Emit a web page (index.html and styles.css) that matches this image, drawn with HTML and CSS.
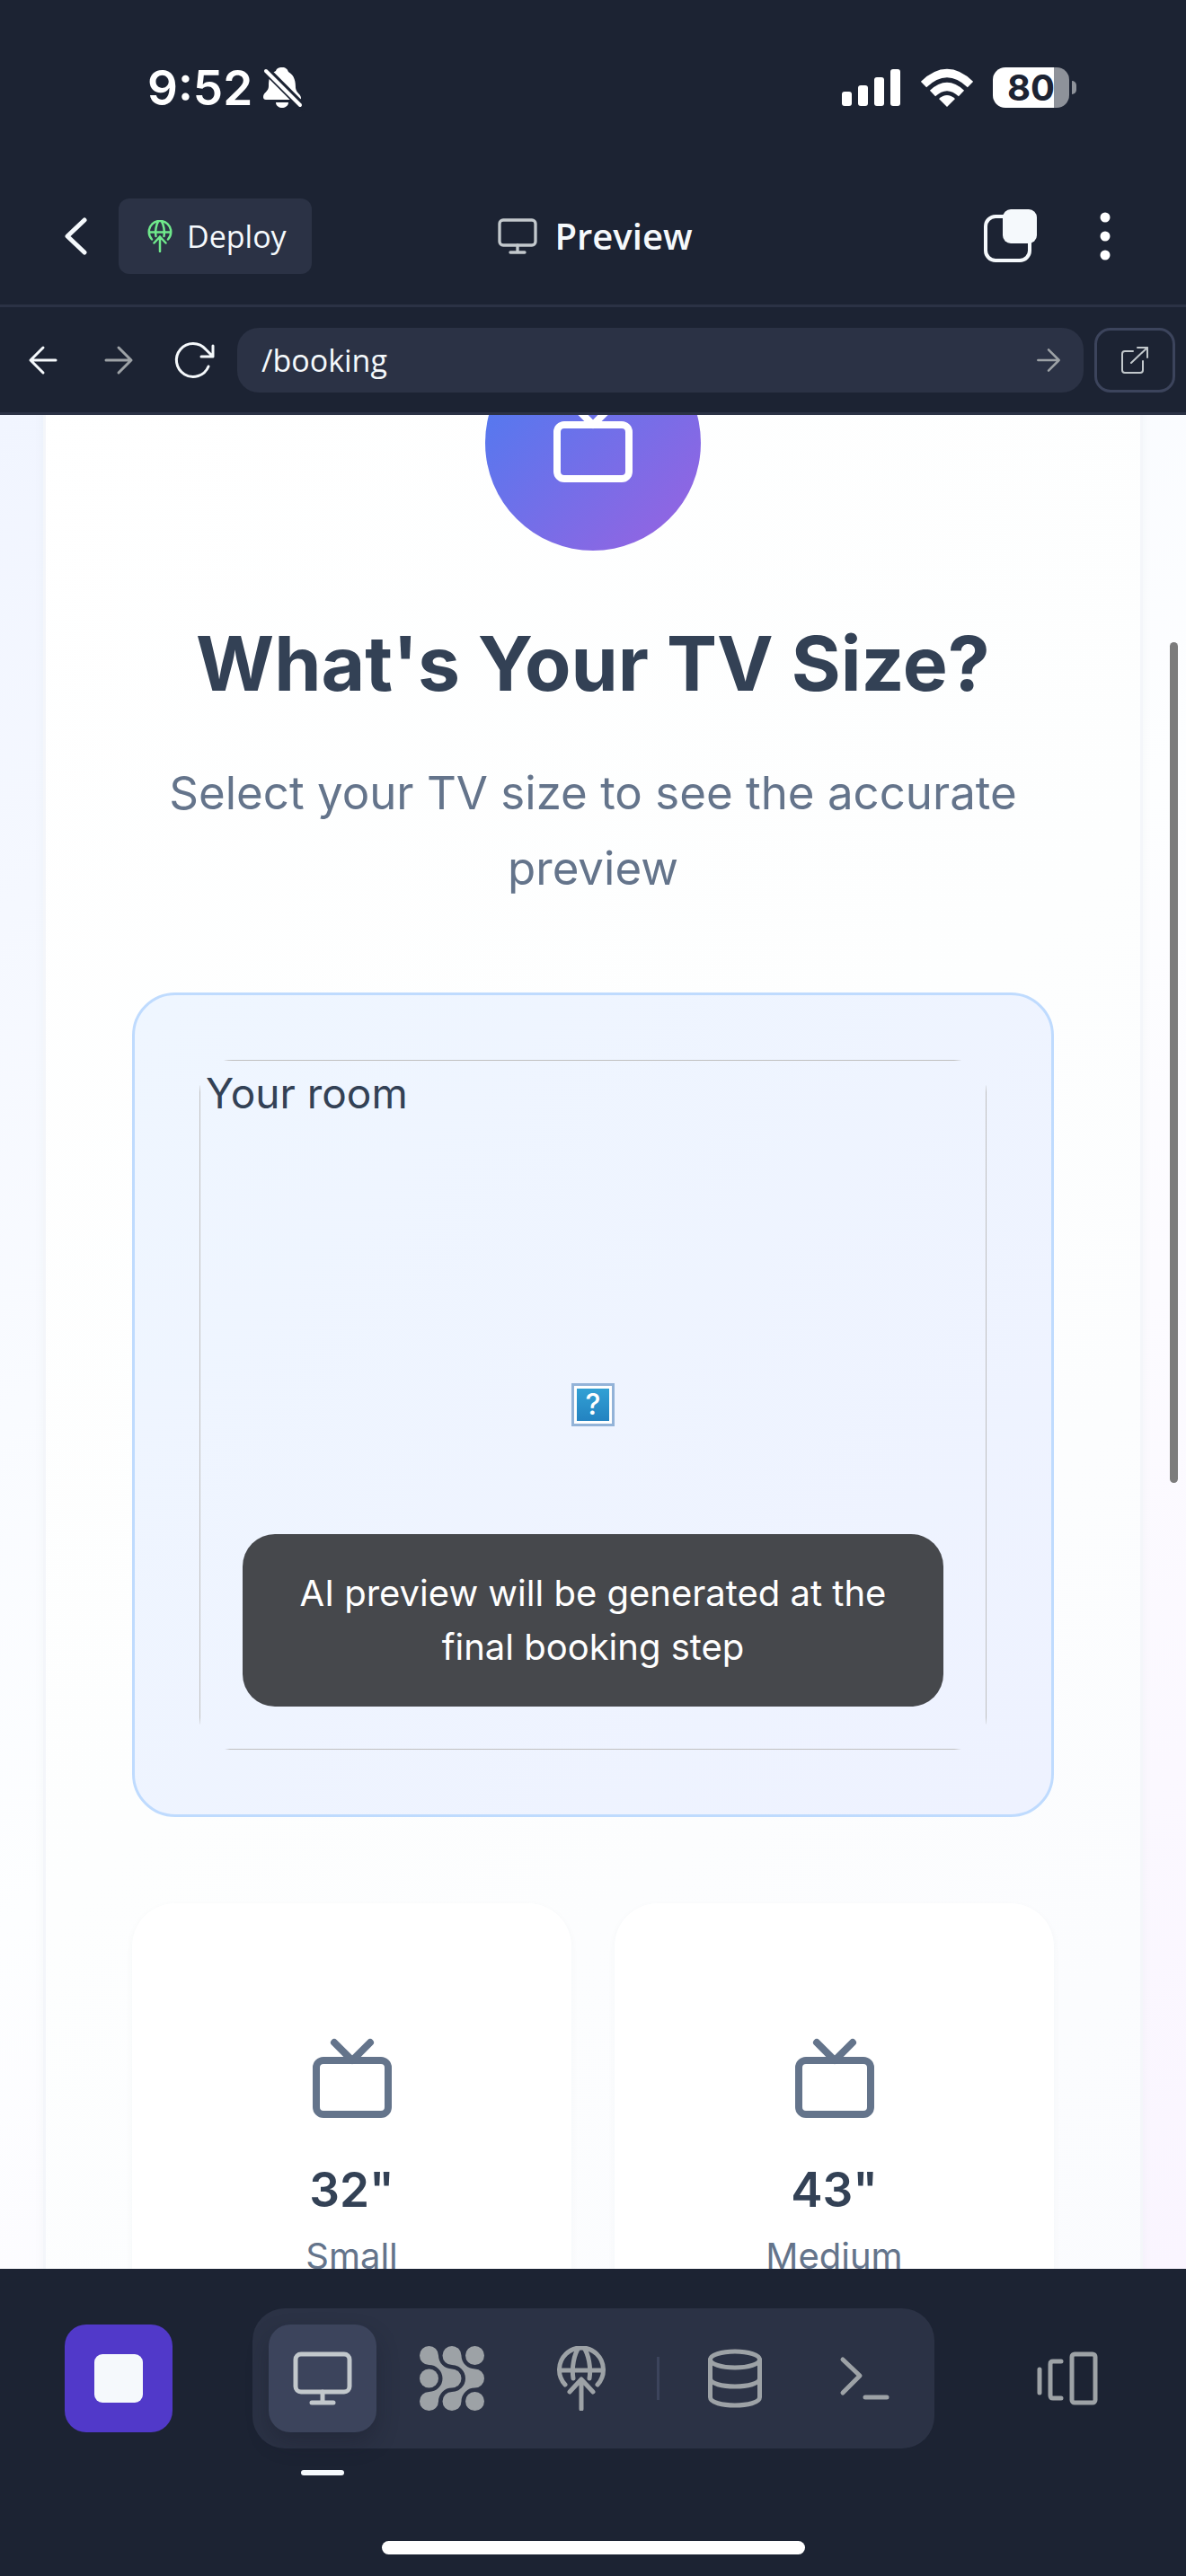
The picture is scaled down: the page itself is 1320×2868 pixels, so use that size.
FILE: index.html
```html
<!DOCTYPE html>
<html lang="en">
<head>
<meta charset="utf-8">
<meta name="viewport" content="width=device-width, initial-scale=1">
<title>Preview</title>
<link rel="stylesheet" href="styles.css">
</head>
<body>
<svg class="sprite" aria-hidden="true">
  <symbol id="tv" viewBox="0 0 24 24"><rect x="2" y="7" width="20" height="15" rx="2"/><path d="M17 2l-5 5-5-5"/></symbol>
  <symbol id="monitor" viewBox="0 0 72 72"><rect x="6" y="9" width="60" height="42" rx="6"/><path d="M36 51v12M24 63h24"/></symbol>
  <symbol id="deploy" viewBox="0 0 72 72"><path d="M18 43A24.500 24.500 0 1 1 54 43M12 27h48M27 36C25 24 28 9 33 2M45 36C47 24 44 9 39 2M36 70V37M23 51l13-14 13 14"/></symbol>
  <symbol id="arrow" viewBox="0 0 36 36"><path d="M4 18h28M18 4l14 14-14 14"/></symbol>
</svg>
<div class="app">
  <div class="status">
    <div class="clock">
      <span>9:52</span>
      <svg width="48" height="52" viewBox="0 0 48 52">
        <path fill="#fff" d="M23 3c4 0 6 2 7 5 7 4 8 11 8 18 1 6 6 7 6 11 0 2-1 2-3 2H5c-2 0-3-1-3-3 0-5 6-6 6-12 0-8 1-14 8-17 1-3 3-4 7-4zM16 42h14c0 4-4 6-7 6s-7-2-7-6z"/>
        <path stroke="#1c2333" stroke-width="9" d="M2 3l44 44"/><path stroke="#fff" stroke-width="4" stroke-linecap="round" d="M5 7l38 38"/>
      </svg>
    </div>
    <div class="signals">
      <svg class="light" width="66" height="42" viewBox="0 0 66 42"><rect y="25" width="11" height="16" rx="3"/><rect x="18" y="18" width="11" height="23" rx="3"/><rect x="36" y="9" width="11" height="32" rx="3"/><rect x="54" width="11" height="41" rx="3"/></svg>
      <svg class="wifi" width="58" height="44" viewBox="0 0 58 44"><path d="M3 18Q29-7 55 18M13 28Q29 13 45 28"/><path class="light" d="M20 34q9-8 18 0l-9 9z"/></svg>
      <div class="battery"><span>80</span></div>
    </div>
  </div>

  <header class="header">
    <div class="header-left">
      <button class="back" aria-label="Back"><svg width="30" height="48" viewBox="0 0 30 48"><path d="M25 6L6 24l19 18"/></svg></button>
      <button class="deploy"><svg width="36" height="36" viewBox="0 0 72 72"><use href="#deploy"/></svg>Deploy</button>
    </div>
    <h1 class="header-title"><svg width="54" height="48"><use href="#monitor"/></svg>Preview</h1>
    <div class="header-right">
      <button aria-label="Tabs"><svg width="60" height="60" viewBox="0 0 60 60"><rect x="2" y="8" width="49" height="49" rx="11" fill="none" stroke="#f5f9fc" stroke-width="4"/><rect x="21" y="0" width="38" height="38" rx="9" fill="#f5f9fc"/></svg></button>
      <button aria-label="More"><svg class="light" width="12" height="54" viewBox="0 0 12 54"><circle cx="6" cy="6" r="5.500"/><circle cx="6" cy="27" r="5.500"/><circle cx="6" cy="48" r="5.500"/></svg></button>
    </div>
  </header>

  <nav class="toolbar">
    <button class="tool" aria-label="Go back"><svg class="flip" width="36" height="36"><use href="#arrow"/></svg></button>
    <button class="tool dim" aria-label="Go forward"><svg width="36" height="36"><use href="#arrow"/></svg></button>
    <button class="tool" aria-label="Reload"><svg width="48" height="48" viewBox="0 0 48 48"><path d="M40 31A18.500 18.500 0 1 1 37 12L45 20M45 8v12H32"/></svg></button>
    <form class="url">
      <input type="text" value="/booking" aria-label="Path">
      <button aria-label="Go" type="button"><svg width="30" height="30"><use href="#arrow"/></svg></button>
    </form>
    <button class="open" aria-label="Open in new tab"><svg width="36" height="36" viewBox="0 0 36 36"><path d="M16 8H7q-3 0-3 3v18q0 3 3 3h17q3 0 3-3V19M14 21L32 4M21 4h11v11"/></svg></button>
  </nav>

  <main class="page">
    <section class="card">
      <div class="badge"><svg width="96" height="96"><use href="#tv"/></svg></div>
      <h2>What's Your TV Size?</h2>
      <p class="lead">Select your TV size to see the accurate preview</p>
      <div class="preview">
        <div class="frame">
          <div class="image">
            <span class="alt">Your room</span>
            <span class="missing">?</span>
          </div>
          <p class="note">AI preview will be generated at the final booking step</p>
        </div>
      </div>
      <div class="sizes">
        <button class="size"><svg width="96" height="96"><use href="#tv"/></svg><strong>32"</strong><span>Small</span></button>
        <button class="size"><svg width="96" height="96"><use href="#tv"/></svg><strong>43"</strong><span>Medium</span></button>
      </div>
    </section>
    <div class="scrollbar"></div>
  </main>

  <footer class="bottom">
    <div class="bar">
      <button class="stop" aria-label="Stop"><span></span></button>
      <div class="dock">
        <button class="active" aria-label="Preview"><svg width="72" height="72"><use href="#monitor"/></svg></button>
        <button aria-label="Agent"><svg width="72" height="72" viewBox="0 0 72 72"><g class="solid"><path id="blob" d="M10.500 0A10.500 10.500 0 0 1 21 10.500 15 15 0 0 0 36 25.500 10.500 10.500 0 0 1 36 46.500 15 15 0 0 0 21 61.500 10.500 10.500 0 1 1 10.500 51 15 15 0 0 0 10.500 21 10.500 10.500 0 1 1 10.500 0z"/><use href="#blob" x="25.500"/><circle cx="10.500" cy="36" r="10.500"/><circle cx="61.500" cy="10.500" r="10.500"/><circle cx="61.500" cy="61.500" r="10.500"/></g></svg></button>
        <button aria-label="Deployments"><svg width="72" height="72"><use href="#deploy"/></svg></button>
        <i class="divider"></i>
        <button aria-label="Database"><svg width="72" height="72" viewBox="0 0 72 72"><ellipse cx="36" cy="15" rx="27.500" ry="9"/><path d="M8.500 15v42c0 12 55 12 55 0V15M8.500 36c0 12 55 12 55 0"/></svg></button>
        <button aria-label="Shell"><svg width="72" height="72" viewBox="0 0 72 72"><path d="M12 15l19 18-19 19M37 57h24"/></svg></button>
      </div>
      <button class="switcher" aria-label="Switch tabs"><svg width="72" height="72" viewBox="0 0 72 72"><path d="M5 26v26M29 17H20q-3 0-3 3v35q0 3 3 3h9"/><rect x="41" y="9" width="26" height="54" rx="3"/></svg></button>
    </div>
    <div class="home"></div>
  </footer>
</div>
</body>
</html>
```
FILE: styles.css
```css
* { box-sizing: border-box; }
body { margin: 0; font-family: Inter, "Liberation Sans", sans-serif; background: #1c2333; color: #334155; }
h1, h2, p { margin: 0; }
button { margin: 0; padding: 0; border: 0; background: none; font: inherit; color: inherit; display: flex; align-items: center; justify-content: center; }
svg { display: block; flex: none; fill: none; stroke-linecap: round; stroke-linejoin: round; }
.light { fill: #fff; stroke: none; }
.sprite { position: absolute; width: 0; height: 0; }
.app { height: 100vh; display: flex; flex-direction: column; overflow: hidden; }

.status { display: flex; justify-content: space-between; align-items: center; height: 187px; padding: 8px 130px 0 164px; color: #fff; flex: none; }
.clock { display: flex; align-items: center; gap: 10px; font-size: 53px; line-height: 60px; font-weight: 600; }
.signals { display: flex; align-items: center; gap: 22px; }
.wifi { stroke: #fff; stroke-width: 9; stroke-linecap: butt; }
.battery { position: relative; width: 85px; height: 45px; border-radius: 14px; background: linear-gradient(90deg, #fff 80%, #8e929a 80%); color: #1c2333; font-size: 40px; line-height: 45px; font-weight: 700; text-align: center; }
.battery::after { content: ""; position: absolute; left: 88px; top: 15px; width: 5px; height: 15px; border-radius: 0 6px 6px 0; background: #8e929a; }

.header { flex: none; display: grid; grid-template-columns: 1fr auto 1fr; align-items: center; height: 155px; border-bottom: 3px solid #2b3245; color: #f5f9fc; font-family: "Open Sans", sans-serif; }
.header-left { display: flex; align-items: center; padding-left: 69px; gap: 33px; }
.back svg { stroke: #f5f9fc; stroke-width: 5; }
.deploy { height: 84px; padding: 0 28px; border-radius: 12px; background: #2b3245; font-size: 34px; gap: 12px; }
.deploy svg { stroke: #6fe88b; stroke-width: 5; }
.header-title { display: flex; align-items: center; gap: 14px; font-size: 40px; font-weight: 600; line-height: 48px; }
.header-title svg { stroke: #c2c8cc; stroke-width: 5; }
.header-right { display: flex; align-items: center; justify-content: flex-end; gap: 69px; padding-right: 84px; }

.toolbar { flex: none; display: flex; align-items: center; height: 120px; padding: 0 12px 0 6px; border-bottom: 3px solid #2b3245; }
.tool { width: 84px; height: 72px; }
.tool svg { stroke: #f5f9fc; stroke-width: 3; }
.tool.dim svg { stroke: #9da2a6; }
.flip { transform: scaleX(-1); }
.url { flex: 1; display: flex; align-items: center; height: 72px; margin: 0 12px 0 6px; padding: 0 24px 0 27px; border-radius: 24px; background: #2b3245; }
.url input { flex: 1; min-width: 0; padding: 0; border: 0; outline: 0; background: none; color: #f5f9fc; font: 34px "Open Sans", sans-serif; }
.url svg { stroke: #9da2a6; stroke-width: 3; }
.open { width: 90px; height: 72px; border: 3px solid #3c445c; border-radius: 18px; }
.open svg { stroke: #c2c8cc; stroke-width: 2; }

.page { position: relative; flex: 1; min-height: 0; overflow: hidden; padding: 0 48px; background: linear-gradient(135deg, #f1f5ff 0%, #fdfeff 50%, #faf5ff 100%); }
.card { margin-top: -188px; padding: 96px; border: 3px solid #f4f6fa; background: linear-gradient(135deg, #ffffff 0%, #fdfefe 50%, #fafbfe 100%); box-shadow: 0 0 12px rgba(51, 65, 85, .04); text-align: center; }
.badge { display: flex; align-items: center; justify-content: center; width: 240px; height: 240px; margin: 0 auto 72px; border-radius: 50%; background: linear-gradient(135deg, #477df2, #9a62e0); }
.badge svg { stroke: #fff; stroke-width: 2; }
h2 { font-size: 84px; line-height: 108px; font-weight: 700; }
.lead { margin: 48px 0 96px; font-size: 51px; line-height: 84px; color: #64748b; }
.preview { padding: 72px; border: 3px solid #bfdbfe; border-radius: 48px; background: linear-gradient(135deg, #eff6ff, #eef2ff); }
.frame { position: relative; border-radius: 36px; overflow: hidden; }
.image { display: grid; place-items: center; height: 768px; border: 1px solid #c0c0c0; }
.image > * { grid-area: 1 / 1; }
.alt { place-self: start; padding: 6px; font-size: 46px; line-height: 60px; }
.missing { width: 48px; height: 48px; border: 3px solid #93b3d8; background: linear-gradient(#33a3d6, #2280bf); box-shadow: inset 0 0 0 3px #fff; color: #fff; font-size: 32px; line-height: 42px; font-weight: 500; }
.note { position: absolute; left: 48px; right: 48px; bottom: 48px; padding: 36px 48px; border-radius: 36px; background: #46484c; color: #fff; font-size: 40px; line-height: 60px; }
.sizes { display: grid; grid-template-columns: 1fr 1fr; gap: 48px; margin-top: 96px; }
.size { flex-direction: column; padding: 147px 24px; border-radius: 48px; background: #fff; box-shadow: 0 3px 9px rgba(51, 65, 85, .04); }
.size svg { stroke: #64748b; stroke-width: 2; margin-bottom: 36px; }
.size strong { font-size: 53px; line-height: 80px; font-weight: 600; }
.size span { font-size: 40px; line-height: 68px; color: #64748b; }
.scrollbar { position: absolute; right: 9px; top: 253px; width: 9px; height: 936px; border-radius: 5px; background: #7c7c7c; }

.bottom { flex: none; display: flex; flex-direction: column; justify-content: space-between; align-items: center; height: 342px; padding: 44px 0 24px; }
.bar { display: flex; align-items: center; justify-content: space-between; width: 100%; padding: 0 72px; }
.bar button { position: relative; width: 120px; height: 120px; border-radius: 24px; }
.bar svg { stroke: #9da2a6; stroke-width: 5; }
.bar .solid { fill: #9da2a6; stroke: none; }
.bar .stop { background: #5139c9; }
.stop span { width: 54px; height: 54px; border-radius: 9px; background: #f5f9fc; }
.dock { display: flex; align-items: center; gap: 24px; padding: 18px; border-radius: 36px; background: #2b3245; }
.dock .active { background: #3c445c; box-shadow: 0 12px 24px rgba(20, 24, 36, .3); }
.dock .active svg { stroke: #c2c8cc; }
.active::after { content: ""; position: absolute; left: 36px; top: 162px; width: 48px; height: 6px; border-radius: 3px; background: #f5f9fc; }
.divider { width: 3px; height: 48px; background: #3c445c; }
.home { width: 471px; height: 15px; border-radius: 8px; background: #fff; }
```
